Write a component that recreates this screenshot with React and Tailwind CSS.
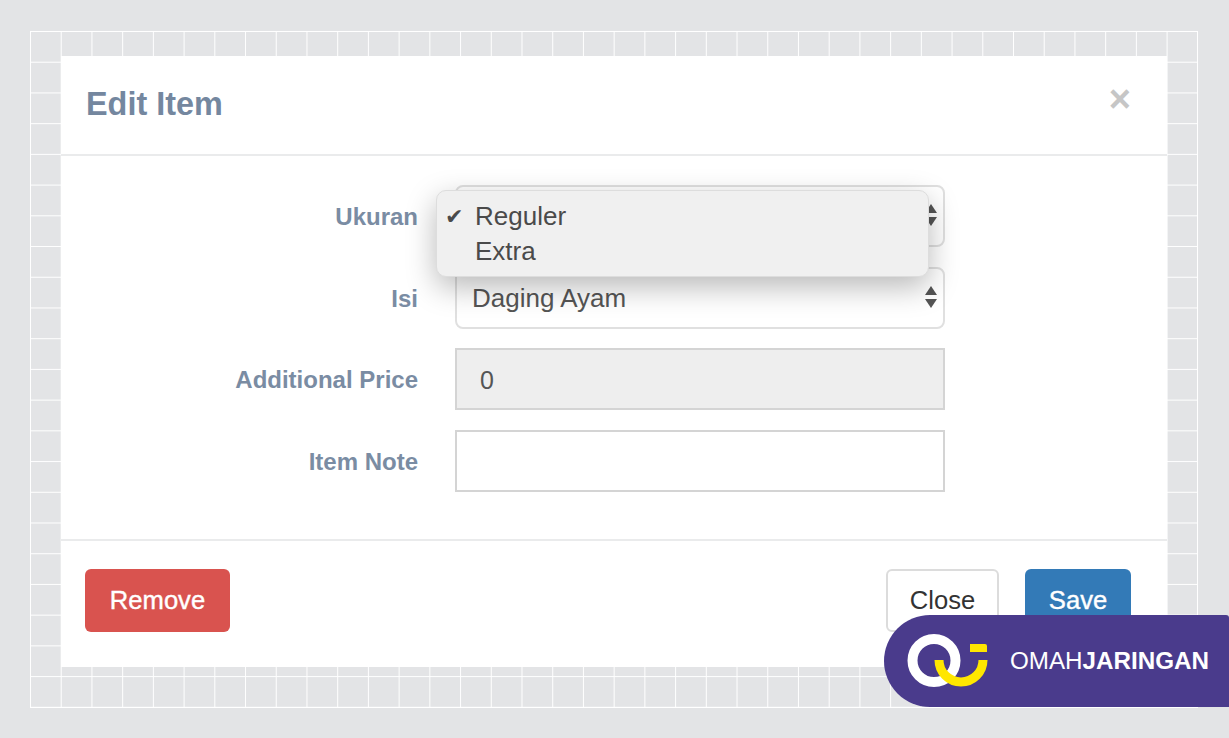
import React from "react";

const SelectArrows = () => (
  <svg width="12" height="22" viewBox="0 0 12 22" className="absolute right-[8px] top-[19px]">
    <path d="M6 0 L12 9 L0 9 Z" fill="#555" />
    <path d="M0 13 L12 13 L6 22 Z" fill="#555" />
  </svg>
);

const Row = ({ label, children }) => (
  <div className="flex items-center">
    <label className="w-[357px] pt-[2px] text-right text-[24px] font-bold text-[#7a8ca3]">{label}</label>
    <div className="relative ml-[37px] w-[490px] h-[62px]">{children}</div>
  </div>
);

const Logo = () => (
  <svg width="82" height="56" viewBox="0 0 82 56" className="shrink-0">
    {/* white ring */}
    <circle cx="27" cy="27.5" r="21.5" fill="none" stroke="#fff" strokeWidth="10" />
    {/* yellow hook */}
    <path d="M32 27 A22 22 0 0 0 76 27" fill="none" stroke="#ffe600" strokeWidth="9" />
    <path d="M63 11 H78 Q80 11 80 13 V19 H63 Z" fill="#ffe600" />
  </svg>
);

export default function App() {
  return (
    <div className="relative h-[738px] w-full overflow-hidden bg-[#e3e4e6] pl-[30px] pt-[31px] font-['Liberation_Sans',Arial,sans-serif]">
      {/* grid backdrop */}
      <div className="h-[677px] w-[1168px] border-r border-b border-white bg-[linear-gradient(to_right,#fff_1px,transparent_1px),linear-gradient(to_bottom,#fff_1px,transparent_1px)] bg-[size:30.72px_30.72px] pl-[31px] pt-[25px]">
        {/* modal */}
        <div className="flex h-[611px] w-[1106px] flex-col bg-white">
          <div className="relative h-[100px] border-b-2 border-[#eaebec] pl-[25px] pt-[27px]">
            <h4 className="text-[32.4px] leading-[42px] font-bold text-[#74879f]">Edit Item</h4>
            <span className="absolute right-[36px] top-[21px] text-[38px] leading-[44px] font-bold text-[#c6c6c6]">×</span>
          </div>

          <div className="flex h-[383px] flex-col gap-[19.7px] pt-[29px]">
            <Row label="Ukuran">
              <div className="h-full w-full rounded-[8px] border-2 border-[#e0e0e0] bg-white">
                <SelectArrows />
              </div>
              {/* open native dropdown */}
              <div className="absolute left-[-19px] top-[5px] z-10 h-[87px] w-[493px] rounded-[10px] border border-[#dddddd] bg-[#f0f0f0] pt-[8px] text-[26px] leading-[35px] text-[#4a4a4a] shadow-[0_10px_30px_rgba(0,0,0,0.28)]">
                <div className="flex">
                  <span className="w-[38px] pl-[8px] font-['DejaVu_Sans'] text-[22px]">✔</span>
                  <span>Reguler</span>
                </div>
                <div className="pl-[38px]">Extra</div>
              </div>
            </Row>
            <Row label="Isi">
              <div className="flex h-full w-full items-center rounded-[8px] border-2 border-[#e0e0e0] bg-white pl-[15px] pt-[2px] text-[26px] text-[#555]">
                Daging Ayam
                <SelectArrows />
              </div>
            </Row>
            <Row label="Additional Price">
              <div className="flex h-full w-full items-center border-2 border-[#d4d4d4] bg-[#eeeeee] pl-[23px] pt-[2px] text-[25px] text-[#555]">
                0
              </div>
            </Row>
            <Row label="Item Note">
              <div className="h-full w-full border-2 border-[#d4d4d4] bg-white" />
            </Row>
          </div>

          <div className="flex flex-1 items-start border-t-2 border-[#eaebec] pl-[24px] pr-[36px] pt-[28px]">
            <button className="h-[63px] w-[145px] rounded-[6px] bg-[#d9534f] text-[25.6px] text-white [-webkit-text-stroke:0.4px_white]">Remove</button>
            <button className="ml-auto h-[63px] w-[113px] rounded-[6px] border-2 border-[#dcdcdc] bg-white text-[25.6px] text-[#333]">Close</button>
            <button className="ml-[26px] h-[63px] w-[106px] rounded-[6px] bg-[#337ab7] text-[25.6px] text-white [-webkit-text-stroke:0.4px_white]">Save</button>
          </div>
        </div>
      </div>

      {/* watermark badge */}
      <div className="absolute right-0 top-[615px] flex h-[92px] w-[345px] items-center rounded-l-[46px] rounded-tr-[3px] bg-[#4a3b8c] pl-[23px]">
        <Logo />
        <span className="ml-[21px] text-[24.2px] text-white">
          OMAH<span className="font-bold">JARINGAN</span>
        </span>
      </div>
    </div>
  );
}
